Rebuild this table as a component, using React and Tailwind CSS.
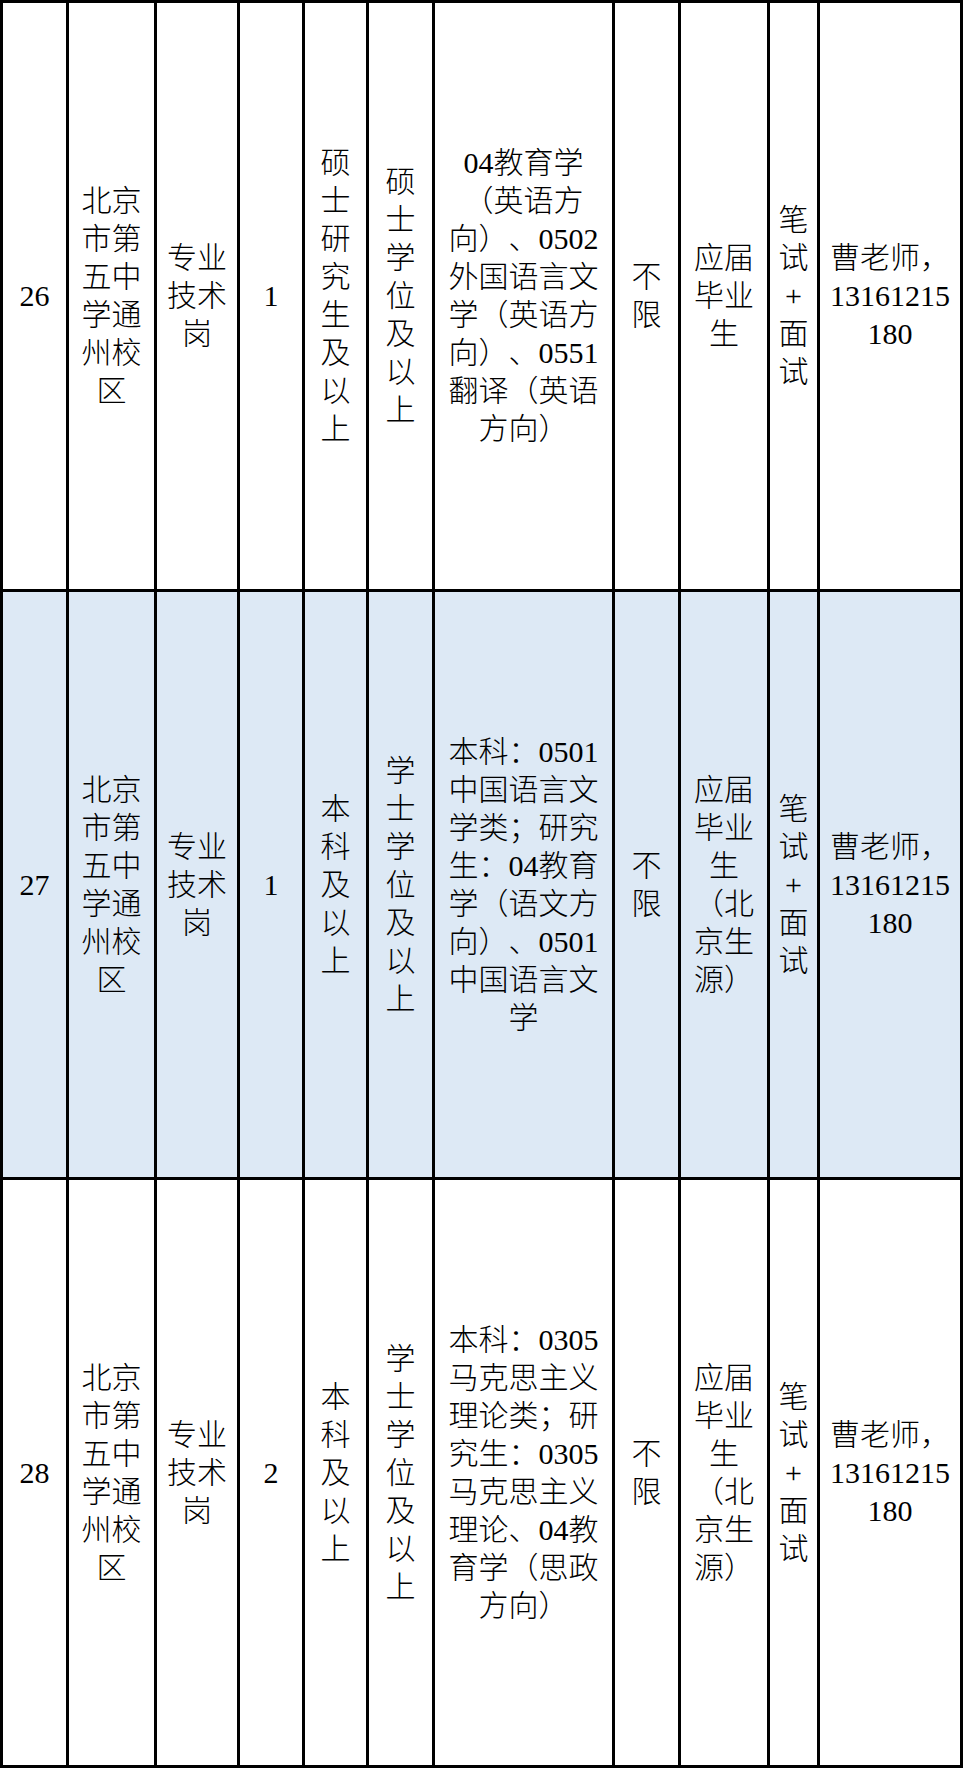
import React from "react";

const rows = [
  {
    bg: "bg-white",
    cells: [
      ["26"],
      ["北京", "市第", "五中", "学通", "州校", "区"],
      ["专业", "技术", "岗"],
      ["1"],
      ["硕", "士", "研", "究", "生", "及", "以", "上"],
      ["硕", "士", "学", "位", "及", "以", "上"],
      ["04教育学", "（英语方", "向）、0502", "外国语言文", "学（英语方", "向）、0551", "翻译（英语", "方向）"],
      ["不", "限"],
      ["应届", "毕业", "生"],
      ["笔", "试", "+", "面", "试"],
      ["曹老师，", "13161215", "180"],
    ],
  },
  {
    bg: "bg-[#dde9f5]",
    cells: [
      ["27"],
      ["北京", "市第", "五中", "学通", "州校", "区"],
      ["专业", "技术", "岗"],
      ["1"],
      ["本", "科", "及", "以", "上"],
      ["学", "士", "学", "位", "及", "以", "上"],
      ["本科：0501", "中国语言文", "学类；研究", "生：04教育", "学（语文方", "向）、0501", "中国语言文", "学"],
      ["不", "限"],
      ["应届", "毕业", "生", "（北", "京生", "源）"],
      ["笔", "试", "+", "面", "试"],
      ["曹老师，", "13161215", "180"],
    ],
  },
  {
    bg: "bg-white",
    cells: [
      ["28"],
      ["北京", "市第", "五中", "学通", "州校", "区"],
      ["专业", "技术", "岗"],
      ["2"],
      ["本", "科", "及", "以", "上"],
      ["学", "士", "学", "位", "及", "以", "上"],
      ["本科：0305", "马克思主义", "理论类；研", "究生：0305", "马克思主义", "理论、04教", "育学（思政", "方向）"],
      ["不", "限"],
      ["应届", "毕业", "生", "（北", "京生", "源）"],
      ["笔", "试", "+", "面", "试"],
      ["曹老师，", "13161215", "180"],
    ],
  },
];

export default function App() {
  return (
    <div className="w-[963px] h-[1768px] bg-white">
      <div
        className="w-[963px] grid grid-cols-[66px_88px_83px_65px_64px_66px_180px_66px_89px_50px_143px] grid-rows-[589px_588px_588px] border-l-[3px] border-t-[3px] border-black text-black text-[30px] leading-[38px] [text-spacing-trim:space-all]"
        style={{ fontFamily: '"Liberation Serif", "Noto Sans CJK SC", serif' }}
      >
        {rows.map((row, ri) =>
          row.cells.map((lines, ci) => (
            <div
              key={ri + "-" + ci}
              className={`${row.bg} border-r-[3px] border-b-[3px] border-black flex flex-col items-center justify-center text-center font-light`}
            >
              {lines.map((l, li) => (
                <div key={li} className="whitespace-nowrap">
                  {l}
                </div>
              ))}
            </div>
          ))
        )}
      </div>
    </div>
  );
}
